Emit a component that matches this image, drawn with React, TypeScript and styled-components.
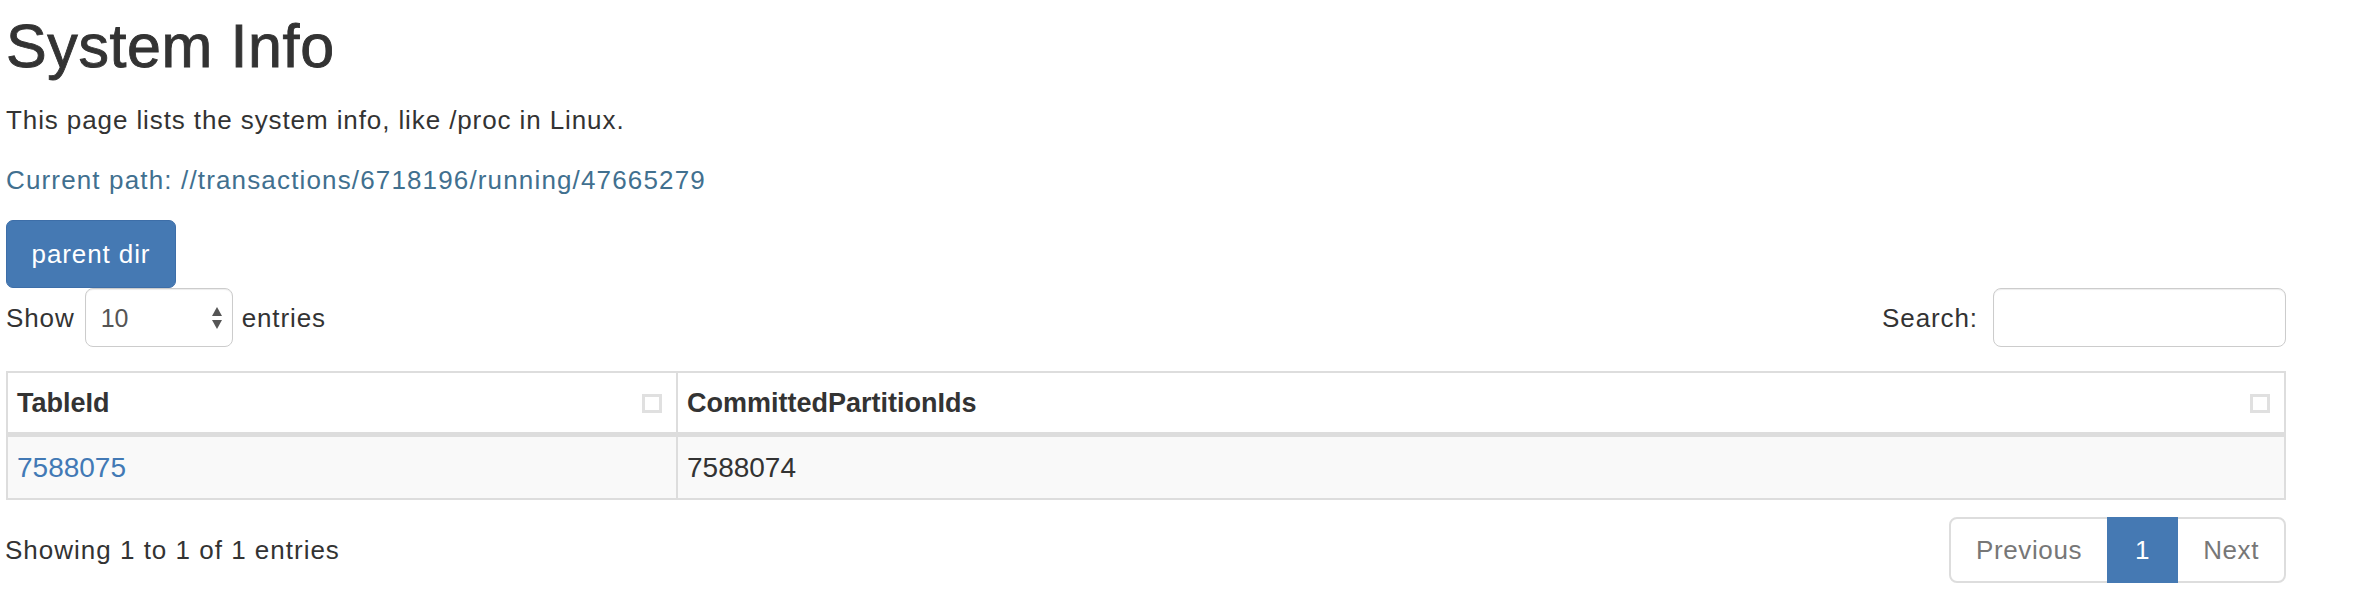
import React from "react";
import styled, { createGlobalStyle } from "styled-components";

const Global = createGlobalStyle`
  html, body { margin: 0; padding: 0; background: #fff; }
  body {
    font-family: "Liberation Sans", Arial, Helvetica, sans-serif;
    font-size: 26px;
    line-height: 36px;
    color: #333;
  }
  * { box-sizing: border-box; }
`;

const Page = styled.div`
  width: 2280px;
  margin-left: 6px;
  display: flex;
  flex-direction: column;
  align-items: flex-start;
`;

const Title = styled.h1`
  margin: 13px 0 0;
  font-size: 61px;
  line-height: 67px;
  font-weight: 400;
  letter-spacing: 0.6px;
  -webkit-text-stroke: 0.9px #333;
  color: #333;
`;

const Lead = styled.p`
  margin: 22px 0 0;
  letter-spacing: 0.9px;
`;

const PathLine = styled.p`
  margin: 24px 0 0;
  color: #41708f;
  letter-spacing: 1.15px;
`;

const PrimaryButton = styled.button`
  margin-top: 22px;
  width: 170px;
  height: 68px;
  padding: 0;
  border: 1.5px solid #3d6ea8;
  border-radius: 7px;
  background: #4579b3;
  color: #fff;
  font: inherit;
  letter-spacing: 0.9px;
  cursor: pointer;
`;

const Controls = styled.div`
  align-self: stretch;
  height: 59px;
  display: flex;
  justify-content: space-between;
  align-items: center;
`;

const LengthControl = styled.label`
  display: flex;
  align-items: center;
  letter-spacing: 0.9px;
`;

const SelectBox = styled.div`
  width: 148px;
  height: 59px;
  margin: 0 9px 0 10px;
  display: flex;
  align-items: center;
  padding: 0 10px 0 15px;
  border: 1.5px solid #ccc;
  border-radius: 8px;
  box-shadow: inset 0 1px 1px rgba(0, 0, 0, 0.075);
  background: #fff;
`;

const Select = styled.select`
  flex: 1;
  min-width: 0;
  appearance: none;
  -webkit-appearance: none;
  border: none;
  outline: none;
  background: transparent;
  padding: 0;
  font: inherit;
  font-size: 25px;
  color: #555;
`;

const SearchControl = styled.label`
  display: flex;
  align-items: center;
  gap: 15px;
  letter-spacing: 0.9px;
`;

const SearchInput = styled.input`
  width: 293px;
  height: 59px;
  border: 1.5px solid #ccc;
  border-radius: 8px;
  box-shadow: inset 0 1px 1px rgba(0, 0, 0, 0.075);
  padding: 0 15px;
  font: inherit;
  outline: none;
`;

const Table = styled.table`
  margin-top: 24px;
  width: 2280px;
  table-layout: fixed;
  border-collapse: separate;
  border-spacing: 0;
  border-top: 2px solid #ddd;
  border-left: 2px solid #ddd;
`;

const HeadCell = styled.th`
  text-align: left;
  font-size: 27px;
  font-weight: 700;
  line-height: 36px;
  padding: 12px 14px 11px 9px;
  border-right: 2px solid #ddd;
  border-bottom: 5px solid #ddd;
  background: #fff;
`;

const HeadInner = styled.div`
  display: flex;
  justify-content: space-between;
  align-items: center;
`;

const SortIcon = styled.span`
  width: 20px;
  height: 19px;
  border: 3px solid #e0e0e0;
`;

const BodyRow = styled.tr`
  background: #f9f9f9;
`;

const Cell = styled.td`
  font-size: 28px;
  line-height: 36px;
  padding: 13px 9px 12px;
  border-right: 2px solid #ddd;
  border-bottom: 2px solid #ddd;
`;

const Link = styled.a`
  color: #4279b5;
  text-decoration: none;
`;

const Footer = styled.div`
  align-self: stretch;
  margin-top: 17px;
  display: flex;
  justify-content: space-between;
  align-items: center;
`;

const Info = styled.div`
  letter-spacing: 1px;
  margin-left: -1px;
`;

const Pager = styled.ul`
  display: flex;
  margin: 0;
  padding: 0;
  list-style: none;
`;

const PageItem = styled.li<{ $active?: boolean; $first?: boolean; $last?: boolean }>`
  height: 66px;
  display: flex;
  align-items: center;
  padding: 0 ${(p) => (p.$active ? 26 : 25)}px;
  margin-left: ${(p) => (p.$first ? 0 : -2)}px;
  border: 2px solid ${(p) => (p.$active ? "#4579b3" : "#ddd")};
  background: ${(p) => (p.$active ? "#4579b3" : "#fff")};
  color: ${(p) => (p.$active ? "#fff" : "#777")};
  letter-spacing: 0.6px;
  border-radius: ${(p) => (p.$first ? "8px 0 0 8px" : p.$last ? "0 8px 8px 0" : "0")};
  position: relative;
  z-index: ${(p) => (p.$active ? 1 : 0)};
`;

const Arrows = () => (
  <svg width="10" height="22" viewBox="0 0 10 22" aria-hidden="true">
    <polygon points="5,0 10,9 0,9" fill="#555" />
    <polygon points="0,13 10,13 5,22" fill="#555" />
  </svg>
);

export default function App() {
  return (
    <>
      <Global />
      <Page>
        <Title>System Info</Title>
        <Lead>This page lists the system info, like /proc in Linux.</Lead>
        <PathLine>Current path: //transactions/6718196/running/47665279</PathLine>
        <PrimaryButton type="button">parent dir</PrimaryButton>
        <Controls>
          <LengthControl>
            Show
            <SelectBox>
              <Select defaultValue="10">
                <option value="10">10</option>
                <option value="25">25</option>
                <option value="50">50</option>
                <option value="100">100</option>
              </Select>
              <Arrows />
            </SelectBox>
            entries
          </LengthControl>
          <SearchControl>
            Search:
            <SearchInput type="search" />
          </SearchControl>
        </Controls>
        <Table>
          <colgroup>
            <col style={{ width: 670 }} />
            <col />
          </colgroup>
          <thead>
            <tr>
              <HeadCell>
                <HeadInner>
                  TableId
                  <SortIcon />
                </HeadInner>
              </HeadCell>
              <HeadCell>
                <HeadInner>
                  CommittedPartitionIds
                  <SortIcon />
                </HeadInner>
              </HeadCell>
            </tr>
          </thead>
          <tbody>
            <BodyRow>
              <Cell>
                <Link href="#">7588075</Link>
              </Cell>
              <Cell>7588074</Cell>
            </BodyRow>
          </tbody>
        </Table>
        <Footer>
          <Info>Showing 1 to 1 of 1 entries</Info>
          <Pager>
            <PageItem $first>Previous</PageItem>
            <PageItem $active>1</PageItem>
            <PageItem $last>Next</PageItem>
          </Pager>
        </Footer>
      </Page>
    </>
  );
}
